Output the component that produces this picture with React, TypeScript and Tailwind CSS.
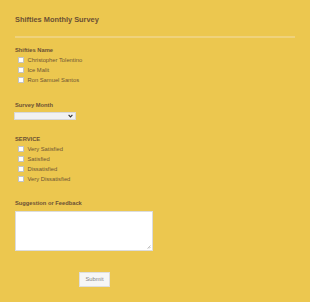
import React from "react";

const font = { fontFamily: '"Liberation Sans", Arial, sans-serif' };

function Check({ label }: { label: string }) {
  return (
    <div className="flex items-center h-[10px]">
      <span className="ml-[2.5px] w-[6px] h-[6px] bg-white border-[0.5px] border-[#c4c4c4] box-border" />
      <span className="ml-[4px] text-[5.8px] leading-[10px] text-[#6f5535]">{label}</span>
    </div>
  );
}

export default function App() {
  return (
    <div className="w-[310px] h-[302px] bg-[#ecc74f] overflow-hidden" style={font}>
      <div className="pl-[15px] pt-[15px] flex flex-col">
        <div className="h-[10px] leading-[10px] text-[7.4px] font-bold text-[#6b5034]">Shifties Monthly Survey</div>
        <div className="mt-[11px] w-[280px] h-[1.5px] bg-[#efd27c]" />
        <div className="mt-[8.5px] h-[8px] leading-[8px] text-[5.75px] font-bold text-[#6b5034]">Shifties Name</div>
        <div className="mt-[1px] flex flex-col">
          <Check label="Christopher Tolentino" />
          <Check label="Ice Malit" />
          <Check label="Ron Samuel Santos" />
        </div>
        <div className="mt-[16px] h-[8px] leading-[8px] text-[5.75px] font-bold text-[#6b5034]">Survey Month</div>
        <div className="mt-[3px] -ml-px w-[62px] h-[8px] bg-[#f1f1f1] border-[0.5px] border-[#d8d8d8] box-border flex items-center justify-end pr-[2px]">
          <svg width="5" height="4" viewBox="0 0 5 4">
            <path d="M0.6 0.8 L2.5 2.9 L4.4 0.8" fill="none" stroke="#333" strokeWidth="1.1" />
          </svg>
        </div>
        <div className="mt-[15px] h-[8px] leading-[8px] text-[5.75px] font-bold text-[#6b5034]">SERVICE</div>
        <div className="mt-[1px] flex flex-col">
          <Check label="Very Satisfied" />
          <Check label="Satisfied" />
          <Check label="Dissatisfied" />
          <Check label="Very Dissatisfied" />
        </div>
        <div className="mt-[15px] h-[8px] leading-[8px] text-[5.75px] font-bold text-[#6b5034]">Suggestion or Feedback</div>
        <div className="mt-[4px] relative w-[138px] h-[40px] bg-white border border-[#dcdcdc] box-border">
          <svg className="absolute right-[1px] bottom-[1px]" width="4" height="4" viewBox="0 0 4 4">
            <path d="M0.5 3.5 L3.5 0.5 M2 3.5 L3.5 2" stroke="#999" strokeWidth="0.6" />
          </svg>
        </div>
        <div className="mt-[21px] ml-[64px] w-[31px] h-[15px] bg-[#f6f6f6] border-[0.5px] border-[#dedede] box-border flex items-center justify-center text-[5.8px] text-[#858585]">
          Submit
        </div>
      </div>
    </div>
  );
}
